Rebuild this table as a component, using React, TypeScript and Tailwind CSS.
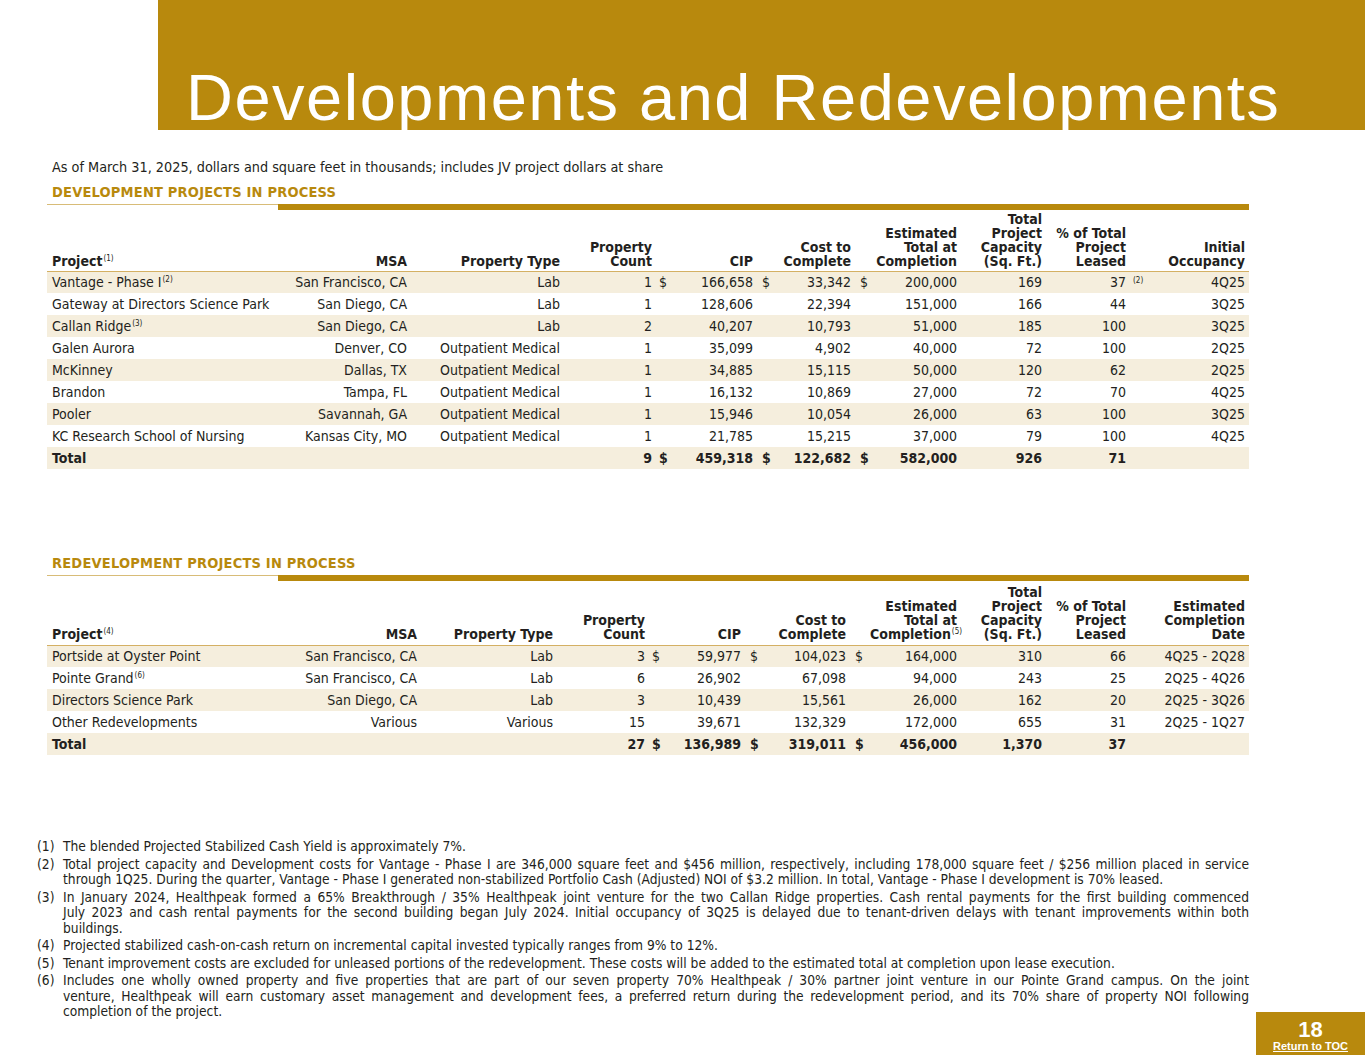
import React from "react";

type DevRow = {
  project: string;
  sup?: string;
  msa: string;
  type: string;
  count: string;
  cip: string;
  cost: string;
  est: string;
  cap: string;
  leased: string;
  note?: string;
  occ: string;
  dollar?: boolean;
  total?: boolean;
};

const devRows: DevRow[] = [
  { project: "Vantage - Phase I", sup: "(2)", msa: "San Francisco, CA", type: "Lab", count: "1", cip: "166,658", cost: "33,342", est: "200,000", cap: "169", leased: "37", note: "(2)", occ: "4Q25", dollar: true },
  { project: "Gateway at Directors Science Park", msa: "San Diego, CA", type: "Lab", count: "1", cip: "128,606", cost: "22,394", est: "151,000", cap: "166", leased: "44", occ: "3Q25" },
  { project: "Callan Ridge", sup: "(3)", msa: "San Diego, CA", type: "Lab", count: "2", cip: "40,207", cost: "10,793", est: "51,000", cap: "185", leased: "100", occ: "3Q25" },
  { project: "Galen Aurora", msa: "Denver, CO", type: "Outpatient Medical", count: "1", cip: "35,099", cost: "4,902", est: "40,000", cap: "72", leased: "100", occ: "2Q25" },
  { project: "McKinney", msa: "Dallas, TX", type: "Outpatient Medical", count: "1", cip: "34,885", cost: "15,115", est: "50,000", cap: "120", leased: "62", occ: "2Q25" },
  { project: "Brandon", msa: "Tampa, FL", type: "Outpatient Medical", count: "1", cip: "16,132", cost: "10,869", est: "27,000", cap: "72", leased: "70", occ: "4Q25" },
  { project: "Pooler", msa: "Savannah, GA", type: "Outpatient Medical", count: "1", cip: "15,946", cost: "10,054", est: "26,000", cap: "63", leased: "100", occ: "3Q25" },
  { project: "KC Research School of Nursing", msa: "Kansas City, MO", type: "Outpatient Medical", count: "1", cip: "21,785", cost: "15,215", est: "37,000", cap: "79", leased: "100", occ: "4Q25" },
  { project: "Total", msa: "", type: "", count: "9", cip: "459,318", cost: "122,682", est: "582,000", cap: "926", leased: "71", occ: "", dollar: true, total: true },
];

const redevRows: DevRow[] = [
  { project: "Portside at Oyster Point", msa: "San Francisco, CA", type: "Lab", count: "3", cip: "59,977", cost: "104,023", est: "164,000", cap: "310", leased: "66", occ: "4Q25 - 2Q28", dollar: true },
  { project: "Pointe Grand", sup: "(6)", msa: "San Francisco, CA", type: "Lab", count: "6", cip: "26,902", cost: "67,098", est: "94,000", cap: "243", leased: "25", occ: "2Q25 - 4Q26" },
  { project: "Directors Science Park", msa: "San Diego, CA", type: "Lab", count: "3", cip: "10,439", cost: "15,561", est: "26,000", cap: "162", leased: "20", occ: "2Q25 - 3Q26" },
  { project: "Other Redevelopments", msa: "Various", type: "Various", count: "15", cip: "39,671", cost: "132,329", est: "172,000", cap: "655", leased: "31", occ: "2Q25 - 1Q27" },
  { project: "Total", msa: "", type: "", count: "27", cip: "136,989", cost: "319,011", est: "456,000", cap: "1,370", leased: "37", occ: "", dollar: true, total: true },
];

// footnotes split at the same line breaks as the printed page
const footnotes: [string, string[]][] = [
  ["(1)", ["The blended Projected Stabilized Cash Yield is approximately 7%."]],
  [
    "(2)",
    [
      "Total project capacity and Development costs for Vantage - Phase I are 346,000 square feet and $456 million, respectively, including 178,000 square feet / $256 million placed in service",
      "through 1Q25. During the quarter, Vantage - Phase I generated non-stabilized Portfolio Cash (Adjusted) NOI of $3.2 million. In total, Vantage - Phase I development is 70% leased.",
    ],
  ],
  [
    "(3)",
    [
      "In January 2024, Healthpeak formed a 65% Breakthrough / 35% Healthpeak joint venture for the two Callan Ridge properties. Cash rental payments for the first building commenced",
      "July 2023 and cash rental payments for the second building began July 2024. Initial occupancy of 3Q25 is delayed due to tenant-driven delays with tenant improvements within both",
      "buildings.",
    ],
  ],
  ["(4)", ["Projected stabilized cash-on-cash return on incremental capital invested typically ranges from 9% to 12%."]],
  [
    "(5)",
    ["Tenant improvement costs are excluded for unleased portions of the redevelopment. These costs will be added to the estimated total at completion upon lease execution."],
  ],
  [
    "(6)",
    [
      "Includes one wholly owned property and five properties that are part of our seven property 70% Healthpeak / 30% partner joint venture in our Pointe Grand campus. On the joint",
      "venture, Healthpeak will earn customary asset management and development fees, a preferred return during the redevelopment period, and its 70% share of property NOI following",
      "completion of the project.",
    ],
  ],
];

function SectionTitle({ children }: { children: React.ReactNode }) {
  return (
    <div>
      <div className="pl-[5px] text-[14.5px] font-bold leading-[16px] tracking-[0.2px] text-[#b8890d]">{children}</div>
      <div className="mt-[4px] flex items-start">
        <div className="h-px w-[231px] bg-[#d8bc78]" />
        <div className="h-[6px] flex-1 bg-[#b8890d]" />
      </div>
    </div>
  );
}

function Sup({ children }: { children: React.ReactNode }) {
  return <span className="relative -top-[5px] ml-px text-[8px] leading-none font-normal">{children}</span>;
}

function DataTable({ rows, redev }: { rows: DevRow[]; redev?: boolean }) {
  const widths = redev
    ? [253, 121, 136, 92, 19, 77, 25, 80, 20, 91, 85, 84, 0, 119]
    : [233, 131, 153, 92, 16, 85, 19, 79, 21, 85, 85, 84, 30, 89];
  const th = `pr-[4px] text-right whitespace-nowrap ${redev ? "pb-[4px]" : "pb-[3px]"}`;
  return (
    <table className="w-[1202px] table-fixed border-collapse">
      <colgroup>
        {widths.map((w, i) => (
          <col key={i} style={{ width: w }} />
        ))}
      </colgroup>
      <thead>
        <tr
          className={`align-bottom font-bold leading-[14px] text-[14px] border-b border-[#d4b063] ${
            redev ? "h-[64px]" : "h-[61px]"
          }`}
        >
          <th className={`pl-[5px] text-left ${redev ? "pb-[4px]" : "pb-[3px]"}`}>
            Project<Sup>{redev ? "(4)" : "(1)"}</Sup>
          </th>
          <th className={th}>MSA</th>
          <th className={th}>Property Type</th>
          <th className={th}>
            Property
            <br />
            Count
          </th>
          <th />
          <th className={th}>CIP</th>
          <th />
          <th className={th}>
            Cost to
            <br />
            Complete
          </th>
          <th />
          <th className={th}>
            Estimated
            <br />
            Total at
            <br />
            Completion{redev && <Sup>(5)</Sup>}
          </th>
          <th className={th}>
            Total
            <br />
            Project
            <br />
            Capacity
            <br />
            (Sq. Ft.)
          </th>
          <th className={th}>
            % of Total
            <br />
            Project
            <br />
            Leased
          </th>
          <th />
          <th className={th}>
            {redev ? (
              <>
                Estimated
                <br />
                Completion
                <br />
                Date
              </>
            ) : (
              <>
                Initial
                <br />
                Occupancy
              </>
            )}
          </th>
        </tr>
      </thead>
      <tbody>
        {rows.map((r, i) => (
          <tr
            key={r.project}
            className={`h-[22px] text-[14px] leading-[16px] ${i % 2 === 0 ? "bg-[#f5eedd]" : "bg-white"} ${
              r.total ? "font-bold" : ""
            }`}
          >
            <td className="pl-[5px] whitespace-nowrap">
              {r.project}
              {r.sup && <Sup>{r.sup}</Sup>}
            </td>
            <td className="pr-[4px] text-right whitespace-nowrap">{r.msa}</td>
            <td className="pr-[4px] text-right whitespace-nowrap">{r.type}</td>
            <td className="pr-[4px] text-right">{r.count}</td>
            <td className="pl-[3px] text-left">{r.dollar ? "$" : ""}</td>
            <td className="pr-[4px] text-right">{r.cip}</td>
            <td className="pl-[5px] text-left">{r.dollar ? "$" : ""}</td>
            <td className="pr-[4px] text-right">{r.cost}</td>
            <td className="pl-[5px] text-left">{r.dollar ? "$" : ""}</td>
            <td className="pr-[4px] text-right">{r.est}</td>
            <td className="pr-[4px] text-right">{r.cap}</td>
            <td className="pr-[4px] text-right">{r.leased}</td>
            <td className="pl-[3px] text-left">
              {r.note && <span className="relative -top-[4px] text-[8px] leading-none">{r.note}</span>}
            </td>
            <td className="pr-[4px] text-right whitespace-nowrap">{r.occ}</td>
          </tr>
        ))}
      </tbody>
    </table>
  );
}

export default function App() {
  return (
    <div className="relative h-[1055px] w-[1365px] overflow-hidden bg-white text-[#231f20] font-['Liberation_Sans_Narrow','DejaVu_Sans_Condensed','Liberation_Sans',sans-serif]">
      <header className="ml-[158px] flex h-[130px] items-end bg-[#b8890d] pl-[28px]">
        <h1 className="font-['Liberation_Sans',Arial,sans-serif] text-[65px] leading-none tracking-[1.5px] text-white whitespace-nowrap">
          Developments and Redevelopments
        </h1>
      </header>

      <div className="ml-[47px] w-[1202px]">
        <p className="mt-[29px] pl-[5px] text-[14.3px] leading-[16px]">
          As of March 31, 2025, dollars and square feet in thousands; includes JV project dollars at share
        </p>
        <div className="mt-[9px]">
          <SectionTitle>DEVELOPMENT PROJECTS IN PROCESS</SectionTitle>
        </div>
        <DataTable rows={devRows} />

        <div className="mt-[86px]">
          <SectionTitle>REDEVELOPMENT PROJECTS IN PROCESS</SectionTitle>
        </div>
        <DataTable rows={redevRows} redev />

        <div className="mt-[84px] flex flex-col gap-[2px] text-[13.7px] leading-[15.5px]">
          {footnotes.map(([n, lines]) => (
            <div key={n} className="-ml-[10px] grid grid-cols-[26px_1fr]">
              <span>{n}</span>
              <div>
                {lines.map((l, i) => (
                  <div key={i} className={i < lines.length - 1 ? "text-justify [text-align-last:justify]" : ""}>
                    {l}
                  </div>
                ))}
              </div>
            </div>
          ))}
        </div>
      </div>

      <div className="absolute bottom-0 right-0 flex h-[43px] w-[109px] flex-col items-center justify-end bg-[#b8890d] pb-[3px] font-['Liberation_Sans',Arial,sans-serif] text-white">
        <span className="text-[22px] font-bold leading-[20px]">18</span>
        <span className="text-[11px] font-bold leading-[12px] underline">Return to TOC</span>
      </div>
    </div>
  );
}
